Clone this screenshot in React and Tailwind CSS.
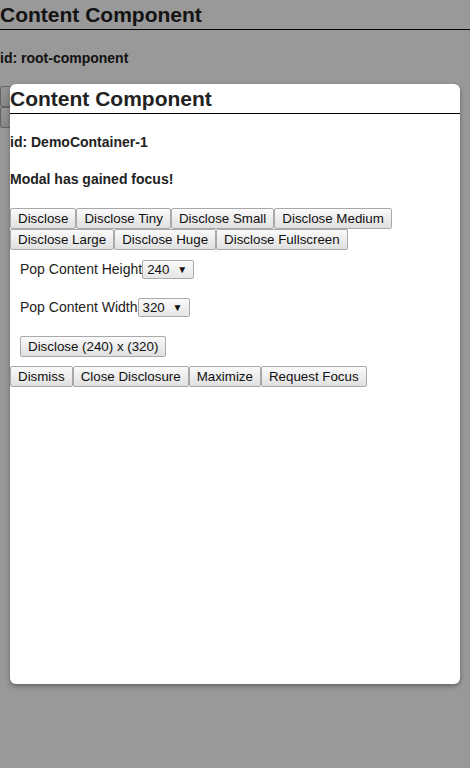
const discloseButtons = [
  "Disclose",
  "Disclose Tiny",
  "Disclose Small",
  "Disclose Medium",
  "Disclose Large",
  "Disclose Huge",
  "Disclose Fullscreen",
];

const actionButtons = ["Dismiss", "Close Disclosure", "Maximize", "Request Focus"];

function Button({ children }) {
  return (
    <button className="h-[21px] px-[7px] text-[13.33px] leading-[15px] text-[#111] whitespace-nowrap border border-[#a9a9a9] rounded-[2px] bg-gradient-to-b from-[#fafafa] to-[#e0e0e0]">
      {children}
    </button>
  );
}

function FakeSelect({ value }) {
  return (
    <div className="h-[19px] w-[52px] flex items-center justify-between pl-[4px] pr-[6px] border border-[#a9a9a9] rounded-[2px] bg-gradient-to-b from-[#fafafa] to-[#e6e6e6] text-[13.33px] leading-[15px] text-[#111]">
      <span>{value}</span>
      <span className="text-[10px] leading-none">▼</span>
    </div>
  );
}

function ContentHeader({ id }) {
  return (
    <>
      <h2 className="h-[30px] text-[21px] leading-[29px] font-bold border-b border-black">
        Content Component
      </h2>
      <p className="mt-[20px] h-[16px] text-[14px] leading-[16px] font-bold">id: {id}</p>
    </>
  );
}

export default function App() {
  return (
    <div
      className="relative w-[470px] h-[768px] overflow-hidden bg-white text-[#222]"
      style={{ fontFamily: '"Liberation Sans", Arial, sans-serif' }}
    >
      <div>
        <ContentHeader id="root-component" />
        <div className="mt-[20px] flex flex-col w-[10px] overflow-hidden">
          <div className="h-[21px] w-[20px] border border-[#a9a9a9] rounded-[2px] bg-gradient-to-b from-[#fafafa] to-[#e0e0e0]" />
          <div className="h-[21px] w-[20px] border border-[#a9a9a9] rounded-[2px] bg-gradient-to-b from-[#fafafa] to-[#e0e0e0]" />
        </div>
      </div>

      <div className="absolute inset-0 bg-black/40" />

      <div className="absolute left-[10px] top-[84px] w-[450px] h-[600px] bg-white rounded-[6px] shadow-[0_2px_5px_rgba(0,0,0,0.35)] overflow-hidden">
        <ContentHeader id="DemoContainer-1" />
        <p className="mt-[21px] h-[16px] text-[14px] leading-[16px] font-bold">
          Modal has gained focus!
        </p>

        <div className="mt-[21px] flex flex-wrap">
          {discloseButtons.map((b) => (
            <Button key={b}>{b}</Button>
          ))}
        </div>

        <div className="pl-[10px]">
          <div className="mt-[10px] h-[19px] flex items-center text-[14px] leading-[19px]">
            <span>Pop Content Height</span>
            <FakeSelect value="240" />
          </div>
          <div className="mt-[19px] h-[19px] flex items-center text-[14px] leading-[19px]">
            <span>Pop Content Width</span>
            <FakeSelect value="320" />
          </div>
          <div className="mt-[19px] flex">
            <Button>Disclose (240) x (320)</Button>
          </div>
        </div>

        <div className="mt-[9px] flex flex-wrap">
          {actionButtons.map((b) => (
            <Button key={b}>{b}</Button>
          ))}
        </div>
      </div>
    </div>
  );
}
